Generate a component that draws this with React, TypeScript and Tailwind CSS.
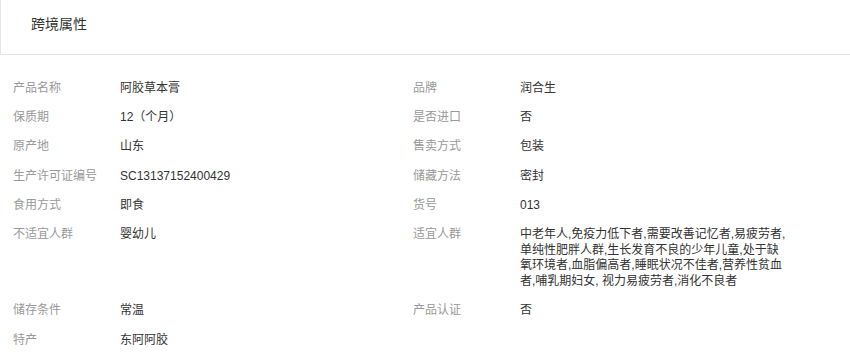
import React from "react";

type Item = { label: string; value: React.ReactNode };

const rows: [Item, Item | null][] = [
  [{ label: "产品名称", value: "阿胶草本膏" }, { label: "品牌", value: "润合生" }],
  [{ label: "保质期", value: "12（个月）" }, { label: "是否进口", value: "否" }],
  [{ label: "原产地", value: "山东" }, { label: "售卖方式", value: "包装" }],
  [{ label: "生产许可证编号", value: "SC13137152400429" }, { label: "储藏方法", value: "密封" }],
  [{ label: "食用方式", value: "即食" }, { label: "货号", value: "013" }],
  [
    { label: "不适宜人群", value: "婴幼儿" },
    {
      label: "适宜人群",
      value: (
        <>
          <span className="block whitespace-nowrap">中老年人,免疫力低下者,需要改善记忆者,易疲劳者,</span>
          <span className="block whitespace-nowrap">单纯性肥胖人群,生长发育不良的少年儿童,处于缺</span>
          <span className="block whitespace-nowrap">氧环境者,血脂偏高者,睡眠状况不佳者,营养性贫血</span>
          <span className="block whitespace-nowrap">者,哺乳期妇女, 视力易疲劳者,消化不良者</span>
        </>
      ),
    },
  ],
  [{ label: "储存条件", value: "常温" }, { label: "产品认证", value: "否" }],
  [{ label: "特产", value: "东阿阿胶" }, null],
];

function Cell({ item }: { item: Item | null }) {
  if (!item) return <div className="w-[400px]" />;
  return (
    <div className="flex w-[400px]">
      <div className="w-[107px] shrink-0 text-[#999999]">{item.label}</div>
      <div className="text-[#333333]">{item.value}</div>
    </div>
  );
}

export default function App() {
  return (
    <div
      className="w-[850px] h-[356px] bg-white overflow-hidden"
      style={{ fontFamily: '"Liberation Sans", "Noto Sans CJK SC", sans-serif' }}
    >
      <div className="h-[55px] border-l border-b border-[#e5e5e5] pl-[30px] pt-[15px] text-[14px] leading-[18px] text-[#333333]">
        跨境属性
      </div>
      <div className="pt-[19px] pl-[13px] text-[12px] leading-[15.6px]">
        {rows.map(([a, b], i) => (
          <div key={i} className="flex py-[6.85px]">
            <Cell item={a} />
            <Cell item={b} />
          </div>
        ))}
      </div>
    </div>
  );
}
